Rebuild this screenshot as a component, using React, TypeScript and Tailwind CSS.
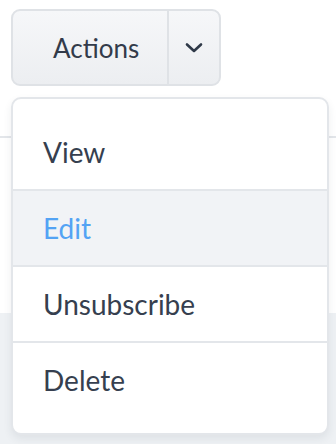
const items = [
  { label: "View", active: false },
  { label: "Edit", active: true },
  { label: "Unsubscribe", active: false },
  { label: "Delete", active: false },
];

const ActionsDropdown = () => {
  return (
    <div className="relative w-[336px] h-[444px] overflow-hidden bg-white font-['Lato','Liberation_Sans',sans-serif]">
      {/* page behind the menu */}
      <div className="flex flex-col h-full">
        <div className="h-[138px] border-b-2 border-[#e3e6ea] pt-[9px] pl-[11px]">
          <div className="flex w-[210px] h-[77px] rounded-[9px] border-2 border-[#dfe2e6] bg-gradient-to-b from-[#f6f7f9] to-[#eceef1] text-[#323b4a]">
            <div className="w-[154px] flex items-center pl-[40px] text-[26px] leading-none">
              Actions
            </div>
            <div className="w-[2px] bg-[#dfe2e6]" />
            <div className="flex-1 flex items-center justify-center">
              <svg width="18" height="12" viewBox="0 0 18 12" fill="none">
                <path
                  d="M2 2.5L9 9L16 2.5"
                  stroke="#2f3948"
                  strokeWidth="2.6"
                  strokeLinecap="round"
                  strokeLinejoin="round"
                />
              </svg>
            </div>
          </div>
        </div>
        <div className="h-[175px]" />
        <div className="flex-1 bg-[#eef1f4]" />
      </div>

      {/* dropdown menu */}
      <div className="absolute top-[97px] left-[11px] w-[318px] rounded-[10px] border-2 border-[#e3e6ea] bg-white pt-[16px] pb-[16px] shadow-[0_4px_8px_rgba(40,50,70,0.08)]">
        {items.map((item, i) => (
          <div
            key={item.label}
            className={`h-[74px] flex items-center pl-[30px] text-[28px] leading-none ${
              item.active ? "bg-[#f1f3f6] text-[#53a3f4]" : "text-[#363f4f]"
            } ${i < items.length - 1 ? "box-content border-b-2 border-[#e3e6ea]" : ""}`}
          >
            {item.label}
          </div>
        ))}
      </div>
    </div>
  );
};

export default function App() {
  return <ActionsDropdown />;
}
